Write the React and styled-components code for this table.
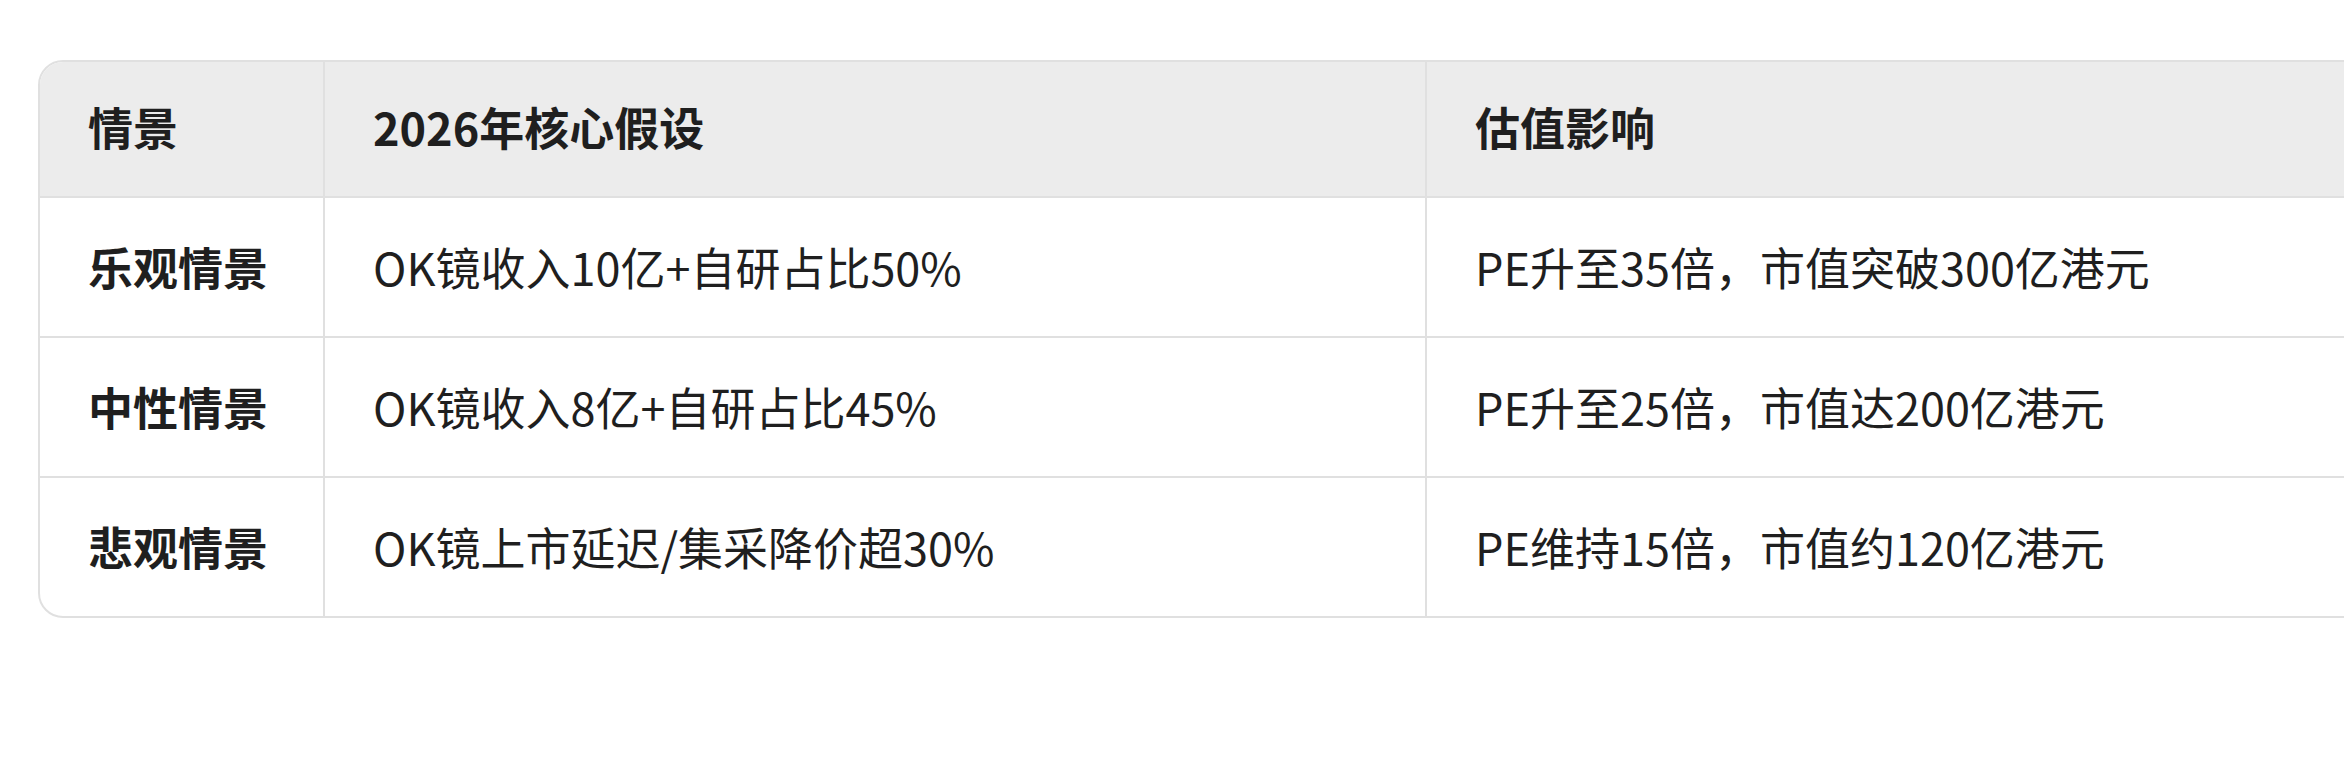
import React from 'react';
import styled, { createGlobalStyle } from 'styled-components';

const GlobalStyle = createGlobalStyle`
  html, body {
    margin: 0;
    padding: 0;
    background: #fff;
    overflow: hidden;
  }
  body {
    font-family: "Noto Sans CJK SC", "Noto Sans", sans-serif;
    color: #1f1f1f;
  }
`;

const Page = styled.div`
  width: 2344px;
  height: 769px;
  padding: 60px 0 0 38px;
  box-sizing: border-box;
  overflow: hidden;
`;

const TableWrap = styled.div`
  width: 2500px;
  border: 2px solid #e0e0e0;
  border-radius: 25px;
  overflow: hidden;
`;

const Table = styled.table`
  width: 100%;
  border-collapse: separate;
  border-spacing: 0;
  table-layout: fixed;
  font-size: 45px;
  line-height: 66px;
`;

const HeadCell = styled.th`
  background: #ececec;
  font-weight: 700;
  text-align: left;
  padding: 32px 48px 36px;
  border-bottom: 2px solid #e0e0e0;
  border-right: 2px solid #e0e0e0;
  white-space: nowrap;
  &:last-child {
    border-right: none;
  }
`;

const BodyCell = styled.td`
  font-weight: ${(p) => (p.$strong ? 700 : 400)};
  padding: 36px 48px;
  border-bottom: ${(p) => (p.$last ? 'none' : '2px solid #e0e0e0')};
  border-right: 2px solid #e0e0e0;
  white-space: nowrap;
  &:last-child {
    border-right: none;
  }
`;

const rows = [
  ['乐观情景', 'OK镜收入10亿+自研占比50%', 'PE升至35倍，市值突破300亿港元'],
  ['中性情景', 'OK镜收入8亿+自研占比45%', 'PE升至25倍，市值达200亿港元'],
  ['悲观情景', 'OK镜上市延迟/集采降价超30%', 'PE维持15倍，市值约120亿港元'],
];

const App = () => {
  return (
    <>
      <GlobalStyle />
      <Page>
        <TableWrap>
          <Table>
            <colgroup>
              <col style={{ width: 285 }} />
              <col style={{ width: 1102 }} />
              <col />
            </colgroup>
            <thead>
              <tr>
                <HeadCell>情景</HeadCell>
                <HeadCell>2026年核心假设</HeadCell>
                <HeadCell>估值影响</HeadCell>
              </tr>
            </thead>
            <tbody>
              {rows.map((r, i) => (
                <tr key={r[0]}>
                  <BodyCell $strong $last={i === rows.length - 1}>{r[0]}</BodyCell>
                  <BodyCell $last={i === rows.length - 1}>{r[1]}</BodyCell>
                  <BodyCell $last={i === rows.length - 1}>{r[2]}</BodyCell>
                </tr>
              ))}
            </tbody>
          </Table>
        </TableWrap>
      </Page>
    </>
  );
};

export default App;
